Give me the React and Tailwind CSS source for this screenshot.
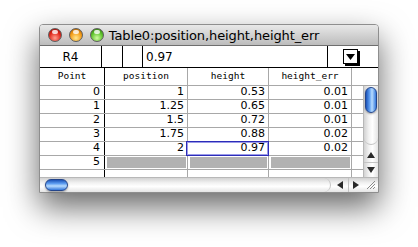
import React from "react";

const rows = [
  ["0", "1", "0.53", "0.01"],
  ["1", "1.25", "0.65", "0.01"],
  ["2", "1.5", "0.72", "0.01"],
  ["3", "1.75", "0.88", "0.02"],
  ["4", "2", "0.97", "0.02"],
];

function Light({ color }) {
  const bg = {
    red: "bg-[radial-gradient(circle_at_50%_75%,#ffa090,#e0261a_55%,#880804)]",
    orange: "bg-[radial-gradient(circle_at_50%_75%,#ffe890,#f49a14_55%,#985000)]",
    green: "bg-[radial-gradient(circle_at_50%_75%,#d0fca0,#5cc22a_55%,#286808)]",
  }[color];
  return (
    <div className={`relative w-[14px] h-[14px] rounded-full border border-[#5e5e5e] ${bg}`}>
      <span className="absolute left-[3px] top-[1px] w-[6px] h-[4px] rounded-full bg-white/80" />
    </div>
  );
}

function Cell({ w, children, className = "" }) {
  return (
    <div className={`${w} h-full shrink-0 flex items-center justify-end pr-[3px] ${className}`}>
      {children}
    </div>
  );
}

export default function App() {
  return (
    <div className="w-[418px] h-[247px] bg-white pt-[24px] pl-[39px] font-['DejaVu_Sans',sans-serif]">
      <div className="w-[340px] flex flex-col border border-[#8e8e8e] rounded-t-[4px] bg-white shadow-[0_14px_32px_rgba(0,0,0,0.6)]">
        {/* title bar */}
        <div className="h-[21px] flex items-center relative border-b border-[#6e6e6e] rounded-t-[3px] bg-[linear-gradient(to_bottom,#e8e8e8,#d2d2d2_50%,#bcbcbc)]">
          <div className="absolute left-[8px] top-[3px] flex gap-[7px]">
            <Light color="red" />
            <Light color="orange" />
            <Light color="green" />
          </div>
          <div className="w-full text-center text-[13px] leading-none text-black pl-[10px] tracking-[-0.1px]">
            Table0:position,height,height_err
          </div>
        </div>

        {/* entry row */}
        <div className="h-[22px] flex border-b border-black text-[12px] text-black">
          <div className="w-[62px] border-r border-black flex items-center justify-center">R4</div>
          <div className="w-[21px] border-r border-black" />
          <div className="w-[20px] border-r border-black" />
          <div className="w-[185px] border-r border-black flex items-center pl-[3px]">0.97</div>
          <div className="flex-1 flex items-center pl-[15px]">
            <div className="w-[15px] h-[15px] border border-black bg-white shadow-[2px_2px_0_#000] flex items-center justify-center">
              <svg width="9" height="6" viewBox="0 0 9 6">
                <path d="M0 0h9L4.5 6z" fill="#000" />
              </svg>
            </div>
          </div>
        </div>

        {/* header row */}
        <div className="h-[18px] flex border-b border-[#a8a8a8] font-['DejaVu_Sans_Mono',monospace] text-[9.5px] text-black">
          <div className="w-[65px] border-r border-black flex items-center justify-center">Point</div>
          <div className="w-[83px] border-r border-[#a8a8a8] flex items-center justify-center">position</div>
          <div className="w-[81px] border-r border-[#a8a8a8] flex items-center justify-center">height</div>
          <div className="w-[83px] border-r border-[#a8a8a8] flex items-center justify-center">height_err</div>
          <div className="flex-1" />
        </div>

        {/* body */}
        <div className="flex h-[91px]">
          <div className="flex-1 flex flex-col text-[11px] text-black">
            {rows.map((r, i) => (
              <div key={i} className="h-[14px] flex border-b border-[#a8a8a8]">
                <Cell w="w-[65px]" className="border-r border-black pr-[4px]">{r[0]}</Cell>
                <Cell w="w-[83px]" className="border-r border-[#a8a8a8]">{r[1]}</Cell>
                <Cell w="w-[81px]" className="border-r border-[#a8a8a8] relative">
                  {i === 4 && (
                    <span className="absolute -left-[2px] -top-[1px] -right-[1px] -bottom-[1px] border border-[#2c2cb8] shadow-[inset_0_0_0_1px_#9a9ae8]" />
                  )}
                  <span className="relative">{r[2]}</span>
                </Cell>
                <Cell w="w-[83px]" className="border-r border-[#a8a8a8]">{r[3]}</Cell>
                <div className="flex-1" />
              </div>
            ))}
            <div className="h-[14px] flex border-b border-[#a8a8a8]">
              <Cell w="w-[65px]" className="border-r border-black pr-[4px]">5</Cell>
              <div className="w-[83px] border-r border-[#a8a8a8] p-[1px] pl-[2px]">
                <div className="w-full h-full bg-[#b2b2b2]" />
              </div>
              <div className="w-[81px] border-r border-[#a8a8a8] p-[1px] pl-[2px]">
                <div className="w-full h-full bg-[#b2b2b2]" />
              </div>
              <div className="w-[83px] border-r border-[#a8a8a8] p-[1px] pl-[2px]">
                <div className="w-full h-full bg-[#b2b2b2]" />
              </div>
              <div className="flex-1" />
            </div>
            <div className="h-[7px] flex">
              <div className="w-[65px] border-r border-black" />
              <div className="w-[83px] border-r border-[#a8a8a8]" />
              <div className="w-[81px] border-r border-[#a8a8a8]" />
              <div className="w-[83px] border-r border-[#a8a8a8]" />
            </div>
          </div>

          {/* vertical scrollbar */}
          <div className="w-[15px] flex flex-col border-l border-[#b8b8b8] bg-[linear-gradient(to_right,#d2d2d2,#f2f2f2_35%,#ffffff_60%,#e4e4e4)]">
            <div className="flex-1 flex flex-col items-center rounded-b-[7px] border-b border-[#c4c4c4] pt-[1px]">
              <div className="w-[12px] h-[26px] rounded-full border border-[#24458a] bg-[linear-gradient(to_right,#1a52b8,#5c9cf0_35%,#b8dcff_60%,#3478dc)] shadow-[0_1px_2px_rgba(0,0,0,0.35)]" />
            </div>
            <div className="h-[15px] flex items-center justify-center mt-[2px]">
              <svg width="8" height="6" viewBox="0 0 8 6"><path d="M4 0L8 6H0z" fill="#2a2a2a" /></svg>
            </div>
            <div className="h-[15px] flex items-center justify-center border-t border-[#c4c4c4]">
              <svg width="8" height="6" viewBox="0 0 8 6"><path d="M0 0h8L4 6z" fill="#2a2a2a" /></svg>
            </div>
          </div>
        </div>

        {/* horizontal scrollbar */}
        <div className="h-[15px] flex border-t border-[#b8b8b8] bg-[linear-gradient(to_bottom,#d2d2d2,#f2f2f2_35%,#ffffff_60%,#e4e4e4)]">
          <div className="flex-1 flex items-center pl-[5px] rounded-r-[7px] border-r border-[#c4c4c4]">
            <div className="w-[23px] h-[12px] rounded-full border border-[#24458a] bg-[linear-gradient(to_bottom,#1a52b8,#5c9cf0_35%,#b8dcff_60%,#3478dc)] shadow-[0_1px_2px_rgba(0,0,0,0.35)]" />
          </div>
          <div className="w-[16px] flex items-center justify-center ml-[1px]">
            <svg width="6" height="8" viewBox="0 0 6 8"><path d="M0 4L6 0v8z" fill="#2a2a2a" /></svg>
          </div>
          <div className="w-[15px] flex items-center justify-center border-l border-[#c4c4c4]">
            <svg width="6" height="8" viewBox="0 0 6 8"><path d="M6 4L0 0v8z" fill="#2a2a2a" /></svg>
          </div>
          <div className="w-[15px] flex items-end justify-end p-[2px]">
            <svg width="11" height="11" viewBox="0 0 11 11">
              <path d="M10 2L2 10M10 5L5 10M10 8L8 10" stroke="#8a8a8a" strokeWidth="1" />
            </svg>
          </div>
        </div>
      </div>
    </div>
  );
}
